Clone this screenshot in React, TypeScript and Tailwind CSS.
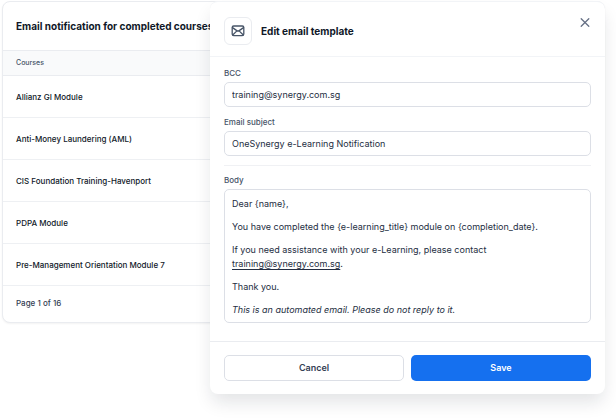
import React from "react";

const courses = [
  "Allianz GI Module",
  "Anti-Money Laundering (AML)",
  "CIS Foundation Training-Havenport",
  "PDPA Module",
  "Pre-Management Orientation Module 7",
];

function MailIcon() {
  return (
    <svg
      viewBox="0 0 14 14"
      className="size-3.5"
      fill="none"
      stroke="currentColor"
      strokeWidth="1.3"
      strokeLinecap="round"
      strokeLinejoin="round"
      aria-hidden="true"
    >
      <rect x="1.2" y="2" width="11.6" height="9.6" rx="1.5" />
      <path d="M1.5 3.6 5.8 6.6c.7.5 1.7.5 2.4 0L12.5 3.6" />
      <path d="M1.7 11 5.4 7.4M12.3 11 8.6 7.4" />
    </svg>
  );
}

function CoursesCard() {
  return (
    <section className="col-start-1 row-start-1 self-start overflow-hidden rounded-lg border border-[#eaecf0] bg-white shadow-xs">
      <h1 className="px-[13px] py-4 text-[10px] leading-4 font-bold">
        Email notification for completed courses
      </h1>
      <table className="w-full text-left">
        <thead>
          <tr className="h-[25px] border-y border-[#eaecf0] bg-[#f9fafb]">
            <th className="px-[13px] text-[7px] font-medium text-[#475467]">
              Courses
            </th>
          </tr>
        </thead>
        <tbody>
          {courses.map((course) => (
            <tr key={course} className="h-[42px] border-b border-[#eef0f3]">
              <td className="px-[13px] text-[8px] font-medium">{course}</td>
            </tr>
          ))}
        </tbody>
      </table>
      <p className="px-[13px] pt-2.5 pb-3 text-[8px] leading-[14px] font-medium text-[#344054]">
        Page 1 of 16
      </p>
    </section>
  );
}

interface FieldProps {
  id: string;
  label: string;
  type: string;
  value: string;
}

function Field({ id, label, type, value }: FieldProps) {
  return (
    <div>
      <label
        htmlFor={id}
        className="mb-[3px] block text-[8px] leading-3 font-medium text-[#475467]"
      >
        {label}
      </label>
      <input
        id={id}
        type={type}
        defaultValue={value}
        className="block h-[25px] w-full rounded-[5px] border border-[#dcdfe6] bg-white px-[7px] text-[9px] text-[#242e42]"
      />
    </div>
  );
}

function EditTemplateModal() {
  return (
    <form
      role="dialog"
      aria-labelledby="modal-title"
      className="z-10 col-start-1 row-start-1 w-[395px] max-w-full self-start justify-self-end rounded-lg border-t border-[#f2f4f7] bg-white shadow-[0_10px_18px_-2px_rgba(16,24,40,0.12)]"
    >
      {/* Header */}
      <div className="flex items-start justify-between border-b border-[#f2f4f7] px-3.5 pt-[15px] pb-[11px]">
        <div className="flex items-center gap-[9px]">
          <div className="flex size-7 items-center justify-center rounded-md border border-[#eaecf0] text-[#475467]">
            <MailIcon />
          </div>
          <h2 id="modal-title" className="text-[10px] font-bold">
            Edit email template
          </h2>
        </div>
        <button type="button" aria-label="Close" className="text-[#667085]">
          <svg
            viewBox="0 0 12 12"
            className="size-3"
            fill="none"
            stroke="currentColor"
            strokeWidth="1.3"
            strokeLinecap="round"
            aria-hidden="true"
          >
            <path d="M2.2 1.7l7.6 7.6M9.8 1.7L2.2 9.3" />
          </svg>
        </button>
      </div>

      {/* Fields */}
      <div className="px-3.5 pt-2.5 pb-[18px]">
        <div className="grid gap-[9px]">
          <Field
            id="bcc"
            label="BCC"
            type="email"
            value="training@synergy.com.sg"
          />
          <Field
            id="subject"
            label="Email subject"
            type="text"
            value="OneSynergy e-Learning Notification"
          />
        </div>
        <hr className="mt-[9px] mb-2 border-[#f0f1f4]" />
        <p
          id="body-label"
          className="mb-[3px] text-[8px] leading-3 font-medium text-[#475467]"
        >
          Body
        </p>
        <div
          role="textbox"
          aria-multiline="true"
          aria-labelledby="body-label"
          contentEditable
          suppressContentEditableWarning
          className="grid gap-[9px] rounded-[5px] border border-[#dcdfe6] px-[7px] pt-[7px] pb-[5px] text-[9px] leading-[14px] text-[#242e42]"
        >
          <p>Dear {"{name}"},</p>
          <p>
            You have completed the {"{e-learning_title}"} module on{" "}
            {"{completion_date}"}.
          </p>
          <p>
            If you need assistance with your e-Learning, please contact
            <br />
            <a
              href="mailto:training@synergy.com.sg"
              className="underline underline-offset-2"
            >
              training@synergy.com.sg
            </a>
            .
          </p>
          <p>Thank you.</p>
          <p className="italic">
            This is an automated email. Please do not reply to it.
          </p>
        </div>
      </div>

      {/* Actions */}
      <div className="grid grid-cols-2 gap-[7px] border-t border-[#eaecf0] px-3.5 py-[13px] text-[9px] font-semibold">
        <button
          type="button"
          className="h-[26px] rounded-[5px] border border-[#dcdfe6] text-[#344054]"
        >
          Cancel
        </button>
        <button
          type="submit"
          className="h-[26px] rounded-[5px] bg-[#1570ef] text-white"
        >
          Save
        </button>
      </div>
    </form>
  );
}

export default function App() {
  return (
    <main className="grid min-h-screen bg-white pt-px pr-[11px] pl-0.5 font-['Inter',sans-serif] text-[#101828]">
      <CoursesCard />
      <EditTemplateModal />
    </main>
  );
}
